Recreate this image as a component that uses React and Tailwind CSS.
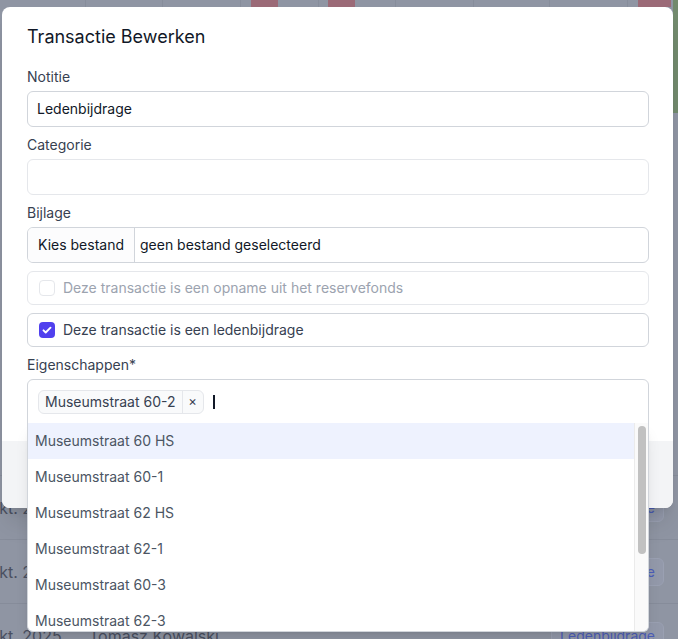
import React from "react";

const items = [
  "Museumstraat 60 HS",
  "Museumstraat 60-1",
  "Museumstraat 62 HS",
  "Museumstraat 62-1",
  "Museumstraat 60-3",
  "Museumstraat 62-3",
  "Museumstraat 62-2",
  "Museumstraat 60-4",
  "Museumstraat 62-4",
];

function Background() {
  return (
    <div className="h-[639px] bg-[#8f95a3] overflow-hidden">
      <div className="flex h-[475px]">
        <div className="flex-1">
          <div className="flex h-[7px]">
            <div className="w-[86px] border-r border-[#878d9b]" />
            <div className="w-[77px] border-r border-[#878d9b]" />
            <div className="w-[78px] border-r border-[#878d9b]" />
            <div className="w-[10px]" />
            <div className="w-[27px] bg-[#9b6a77]" />
            <div className="w-[41px] border-r border-[#878d9b]" />
            <div className="w-[9px]" />
            <div className="w-[27px] bg-[#9b6a77]" />
            <div className="w-[41px] border-r border-[#878d9b]" />
            <div className="w-[78px] border-r border-[#878d9b]" />
            <div className="w-[76px] border-r border-[#878d9b]" />
            <div className="w-[78px] border-r border-[#878d9b]" />
            <div className="w-[10px]" />
            <div className="w-[33px] bg-[#9b6a77]" />
          </div>
        </div>
        <div className="w-[5px]">
          <div className="h-[113px] bg-[#728a6d]" />
        </div>
      </div>
      {[0, 1, 2].map((i) => (
        <div
          key={i}
          className="h-16 flex items-center border-t border-[#868c9a] text-[16px] text-[#4a5061]"
        >
          <span className="ml-[-13px] w-[102px] shrink-0">Okt. 2025</span>
          <span className="flex-1 text-[#4a5061]">{i === 2 ? "Tomasz Kowalski" : ""}</span>
          <span className="mr-[14px] rounded-md border border-[#9aa0b2] bg-[#9399aa] px-2 py-[3px] text-sm text-[#4c5db8]">
            Ledenbijdrage
          </span>
        </div>
      ))}
    </div>
  );
}

function Label({ children }) {
  return <div className="h-5 mb-1 text-sm leading-5 text-[#374151]">{children}</div>;
}

function CheckIcon() {
  return (
    <svg width="16" height="16" viewBox="0 0 16 16" fill="none">
      <path d="M4.5 8.3l2.2 2.2 4.8-4.8" stroke="white" strokeWidth="1.9" strokeLinecap="round" strokeLinejoin="round" />
    </svg>
  );
}

export default function App() {
  return (
    <div className="relative w-[678px] h-[639px] overflow-hidden" style={{ fontFamily: "Inter, 'Noto Sans', sans-serif" }}>
      <Background />
      <div className="absolute left-[2px] top-[7px] w-[671px] rounded-lg bg-white shadow-xl">
        <div className="pl-[25px] pr-[24px] pt-4 pb-[17px]">
          <h2 className="text-lg leading-7 font-normal text-[#111827] mb-4">Transactie Bewerken</h2>

          <Label>Notitie</Label>
          <div className="h-9 mb-2 flex items-center rounded-md border border-[#d1d5db] px-[9px] text-sm text-[#111827]">
            Ledenbijdrage
          </div>

          <Label>Categorie</Label>
          <div className="h-9 mb-2 rounded-md border border-[#e5e7eb]" />

          <Label>Bijlage</Label>
          <div className="h-9 mb-2 flex items-stretch rounded-md border border-[#d1d5db] text-sm text-[#111827] overflow-hidden">
            <div className="flex items-center pl-[10px] pr-[10px] border-r border-[#d1d5db] bg-[#fcfcfd]">Kies bestand</div>
            <div className="flex items-center pl-[5px]">geen bestand geselecteerd</div>
          </div>

          <div className="h-[34px] mb-2 flex items-center gap-2 rounded-md border border-[#e5e7eb] pl-[11px] text-sm text-[#9ca3af]">
            <span className="w-4 h-4 rounded-[4px] border border-[#e5e7eb] bg-white" />
            Deze transactie is een opname uit het reservefonds
          </div>

          <div className="h-[34px] mb-2 flex items-center gap-2 rounded-md border border-[#d1d5db] pl-[11px] text-sm text-[#374151]">
            <span className="w-4 h-4 rounded-[4px] bg-[#5040ee] flex items-center justify-center">
              <CheckIcon />
            </span>
            Deze transactie is een ledenbijdrage
          </div>

          <Label>Eigenschappen*</Label>
          <div className="relative">
            <div className="h-[45px] flex items-center gap-[9px] rounded-t-md border border-[#d1d5db] pl-[10px]">
              <div className="h-6 flex items-stretch rounded-md border border-[#e5e7eb] bg-[#f9fafb] text-sm text-[#374151]">
                <span className="flex items-center pl-[6px] pr-[6px]">Museumstraat 60-2</span>
                <span className="flex items-center justify-center w-[21px] border-l border-[#e5e7eb] text-[13px] text-[#374151]">×</span>
              </div>
              <span className="w-[2px] h-[14px] bg-[#111827]" />
            </div>
            <div className="absolute left-0 right-0 top-[44px] z-10 h-[209px] flex bg-white border border-t-0 border-[#d1d5db] rounded-b-md shadow-lg overflow-hidden">
              <div className="flex-1 overflow-hidden">
                {items.map((it, i) => (
                  <div
                    key={it}
                    className={`h-9 flex items-center pl-[7px] text-sm text-[#4b5563] ${i === 0 ? "bg-[#eef2fe]" : ""}`}
                  >
                    {it}
                  </div>
                ))}
              </div>
              <div className="w-[14px] bg-[#fafafa] border-l border-[#ebebeb] pt-[3px] pl-[3px]">
                <div className="w-[8px] h-[128px] rounded-full bg-[#c1c1c1]" />
              </div>
            </div>
          </div>
        </div>
        <div className="h-[67px] rounded-b-lg bg-[#f3f4f6]" />
      </div>
    </div>
  );
}
